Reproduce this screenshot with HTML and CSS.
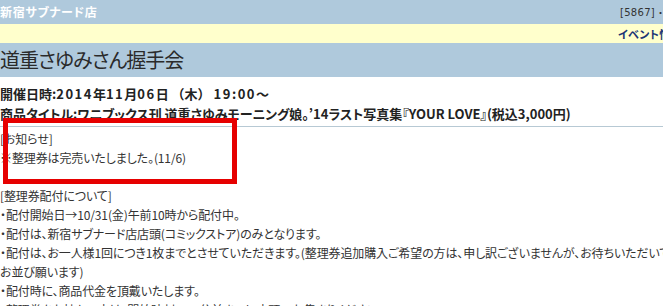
FILE: index.html
```html
<!DOCTYPE html>
<html lang="ja">
<head>
<meta charset="utf-8">
<title>道重さゆみさん握手会</title>
<link rel="stylesheet" href="styles.css">
</head>
<body>
<div class="page">
  <header class="topbar">
    <span class="shop">新宿サブナード店</span>
    <span class="code">[5867]</span>
    <span class="cut">・ログイン</span>
  </header>
  <nav class="navbar">
    <span class="nav-item">イベント情報</span>
  </nav>
  <div class="titlebar">
    <h1 class="title">道重さゆみさん握手会</h1>
  </div>
  <div class="info">
    <p class="info-line">開催日時:<span class="num">2014</span>年<span class="num">11</span>月<span class="num">06</span>日 <span class="wide">（木）</span> <span class="num">19:00</span>～</p>
    <p class="info-line">商品タイトル:ワニブックス刊 道重さゆみモーニング娘。’14ラスト写真集『YOUR LOVE』(税込3,000円)</p>
  </div>
  <div class="body">
    <p class="line">[お知らせ]</p>
    <p class="line">※整理券は完売いたしました。(11/6)</p>
    <p class="line blank">&nbsp;</p>
    <p class="line">[整理券配付について]</p>
    <p class="line">・配付開始日→10/31(金)午前10時から配付中。</p>
    <p class="line">・配付は、新宿サブナード店店頭(コミックストア)のみとなります。</p>
    <p class="line nowrap">・配付は、お一人様1回につき1枚までとさせていただきます。(整理券追加購入ご希望の方は、申し訳ございませんが、お待ちいただいて</p>
    <p class="line">お並び願います)</p>
    <p class="line">・配付時に、商品代金を頂戴いたします。</p>
    <p class="line">・整理券をお持ちの方は、開始時刻の15分前までに店頭へお集まりください。</p>
  </div>
  <div class="mark"></div>
</div>
</body>
</html>
```
FILE: styles.css
```css
html, body {
  margin: 0;
  padding: 0;
  background: #ffffff;
  overflow: hidden;
}
body {
  font-family: "Noto Sans CJK JP", "Noto Sans", sans-serif;
  font-feature-settings: "palt";
  color: #333333;
}
.page {
  position: relative;
  width: 663px;
  height: 306px;
  overflow: hidden;
}
.topbar {
  height: 24px;
  background: #afc9dc;
  display: flex;
  align-items: center;
}
.shop {
  font-size: 12px;
  font-weight: bold;
  color: #ffffff;
  line-height: 14px;
  letter-spacing: 0.7px;
  flex: 1;
}
.code {
  font-family: "DejaVu Sans", sans-serif;
  font-size: 10px;
  color: #333333;
  letter-spacing: 0.3px;
}
.cut {
  width: 5px;
  margin-left: 3px;
  overflow: hidden;
  white-space: nowrap;
  font-size: 10px;
  color: #333333;
}
.navbar {
  height: 19px;
  background: #ffffcc;
  display: flex;
  justify-content: flex-end;
  align-items: center;
}
.nav-item {
  width: 45px;
  overflow: hidden;
  white-space: nowrap;
  font-size: 11px;
  font-weight: bold;
  color: #1a3575;
  line-height: 14px;
  letter-spacing: 0.3px;
}
.titlebar {
  height: 34px;
  background: #afc9dc;
  display: flex;
  align-items: center;
}
.title {
  margin: 0;
  font-size: 20px;
  font-weight: normal;
  line-height: 24px;
  letter-spacing: -1px;
  color: #2a2a2a;
}
.info {
  padding: 7px 0 2px;
  border-bottom: 1px solid #b7c9d4;
}
.info-line {
  margin: 0;
  font-size: 13px;
  font-weight: bold;
  line-height: 20px;
  color: #222222;
  white-space: nowrap;
}
.num {
  letter-spacing: 1.5px;
}
.wide {
  font-feature-settings: normal;
}
.body {
  padding: 2px 0 0 0;
}
.line {
  margin: 0;
  font-size: 12px;
  line-height: 19px;
  letter-spacing: -0.12px;
  color: #333333;
}
.nowrap {
  white-space: nowrap;
}
.mark {
  position: absolute;
  left: 3px;
  top: 118px;
  width: 224px;
  height: 56px;
  border: 5px solid #e60000;
}
```
